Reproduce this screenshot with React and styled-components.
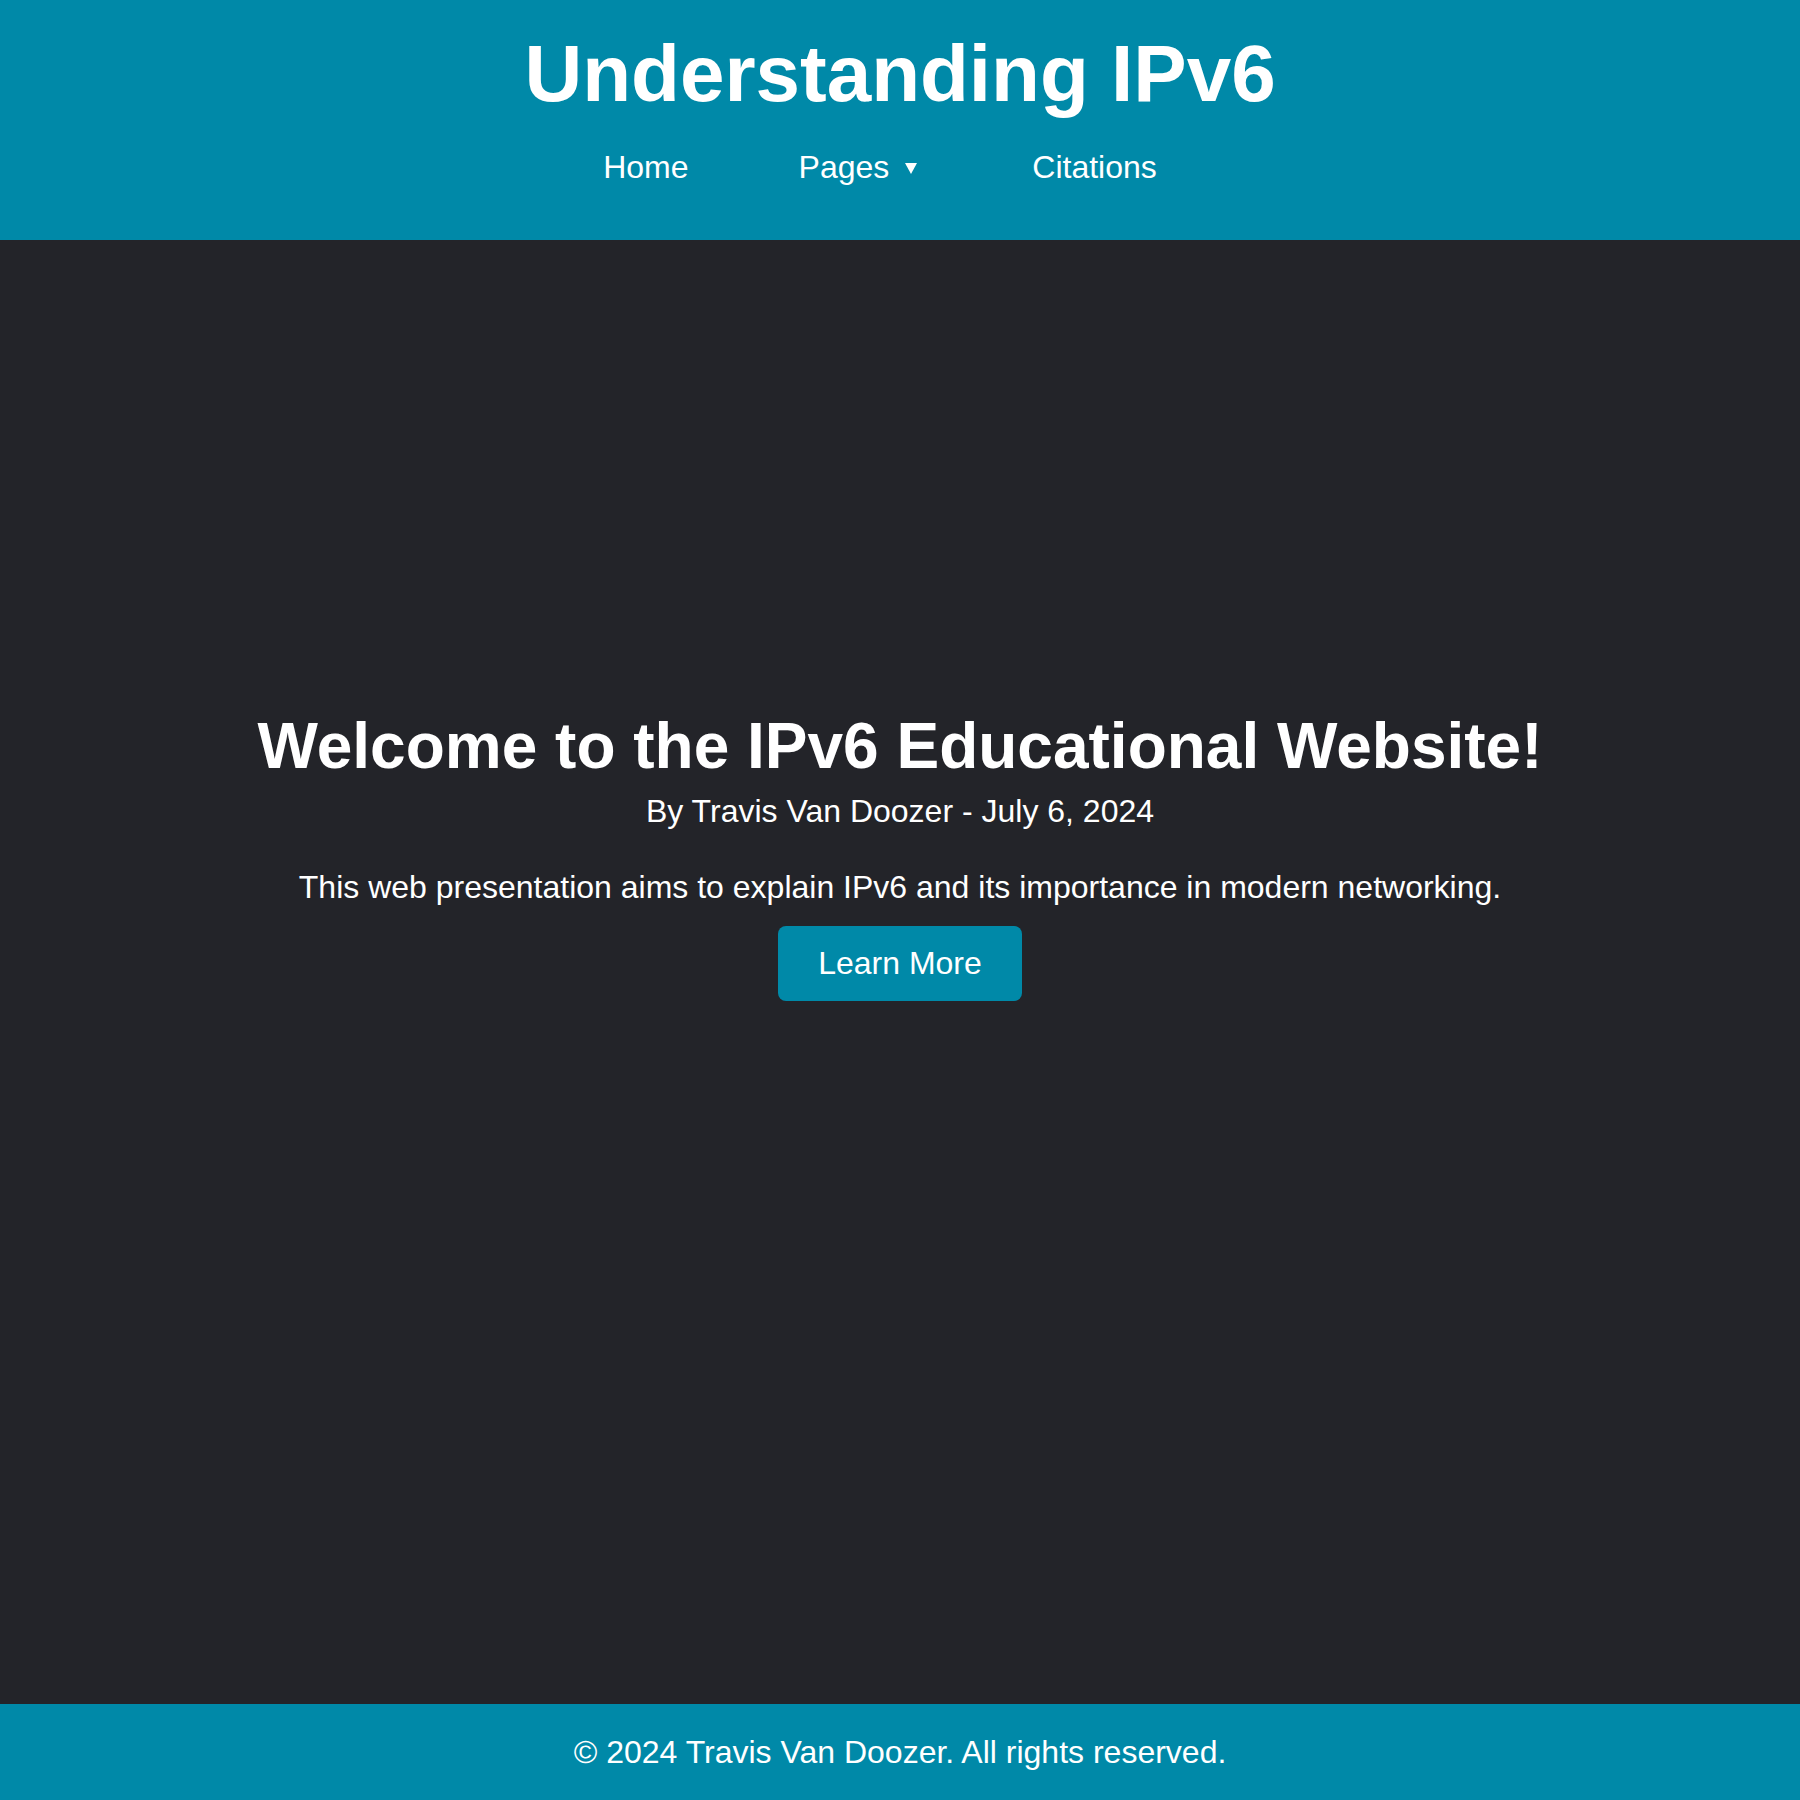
import React from "react";
import styled, { createGlobalStyle } from "styled-components";

const colors = {
  teal: "#0089a8",
  dark: "#232429",
  white: "#ffffff",
};

const GlobalStyle = createGlobalStyle`
  html, body {
    margin: 0;
    padding: 0;
    background: ${colors.dark};
  }
  body {
    font-family: "Liberation Sans", Arial, sans-serif;
    color: ${colors.white};
  }
  * {
    box-sizing: border-box;
  }
`;

const App = () => {
  return (
    <Page>
      <GlobalStyle />
      <Header>
        <Title>Understanding IPv6</Title>
        <Nav>
          <NavLink href="#home">Home</NavLink>
          <NavLink href="#pages">
            Pages
            <Caret />
          </NavLink>
          <NavLink href="#citations">Citations</NavLink>
        </Nav>
      </Header>

      <Main>
        <Hero>
          <HeroTitle>Welcome to the IPv6 Educational Website!</HeroTitle>
          <Byline>By Travis Van Doozer - July 6, 2024</Byline>
          <Intro>
            This web presentation aims to explain IPv6 and its importance in
            modern networking.
          </Intro>
          <LearnButton>Learn More</LearnButton>
        </Hero>
      </Main>

      <Footer>
        <p>&copy; 2024 Travis Van Doozer. All rights reserved.</p>
      </Footer>
    </Page>
  );
};

export default App;

const Page = styled.div`
  display: flex;
  flex-direction: column;
  min-height: 100vh;
`;

const Header = styled.header`
  display: flex;
  flex-direction: column;
  align-items: center;
  height: 240px;
  padding-top: 28px;
  background-color: ${colors.teal};
`;

const Title = styled.h1`
  margin: 0 0 29px;
  font-size: 80px;
  font-weight: bold;
  line-height: normal;
`;

const Nav = styled.nav`
  display: flex;
  align-items: center;
  gap: 110px;
  padding-right: 40px;
`;

const NavLink = styled.a`
  display: flex;
  align-items: center;
  color: ${colors.white};
  text-decoration: none;
  font-size: 32px;
  line-height: normal;
`;

const Caret = styled.span`
  display: inline-block;
  width: 0;
  height: 0;
  margin: 2px 5px 0 16px;
  border-left: 6px solid transparent;
  border-right: 6px solid transparent;
  border-top: 11px solid ${colors.white};
`;

const Main = styled.main`
  flex: 1;
  display: flex;
  justify-content: center;
  padding-top: 469px;
  background-color: ${colors.dark};
`;

const Hero = styled.section`
  display: flex;
  flex-direction: column;
  align-items: center;
  text-align: center;
`;

const HeroTitle = styled.h2`
  margin: 0 0 10px;
  font-size: 64px;
  font-weight: bold;
  line-height: normal;
`;

const Byline = styled.p`
  margin: 0 0 39px;
  font-size: 32px;
  line-height: normal;
`;

const Intro = styled.p`
  margin: 0 0 20px;
  font-size: 32px;
  line-height: normal;
`;

const LearnButton = styled.button`
  padding: 19px 40px;
  border: none;
  border-radius: 8px;
  background-color: ${colors.teal};
  color: ${colors.white};
  font-family: inherit;
  font-size: 32px;
  line-height: normal;
  cursor: pointer;
`;

const Footer = styled.footer`
  height: 96px;
  display: flex;
  align-items: center;
  justify-content: center;
  background-color: ${colors.teal};

  p {
    margin: 0;
    font-size: 32px;
    line-height: normal;
  }
`;
